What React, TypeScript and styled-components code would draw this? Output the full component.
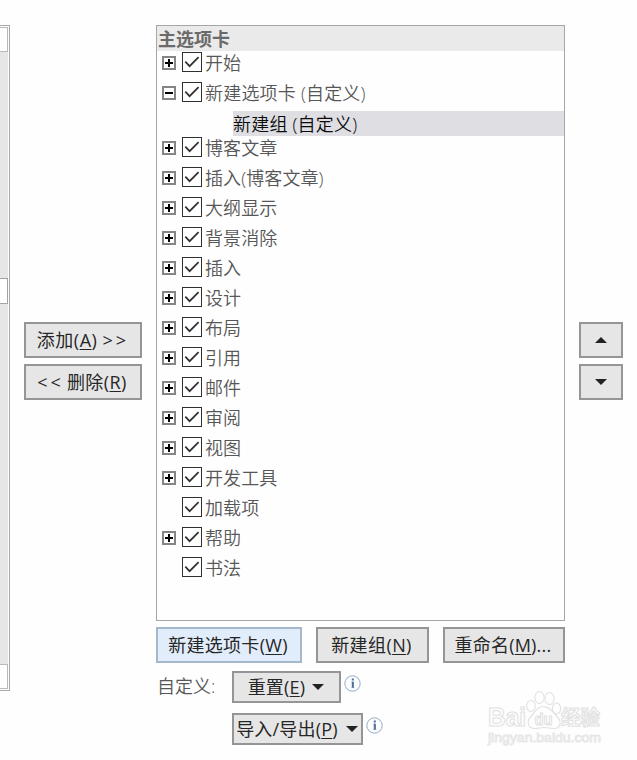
import React from "react";
import styled, { createGlobalStyle } from "styled-components";

const GlobalStyle = createGlobalStyle`
  * { box-sizing: border-box; }
  body {
    margin: 0;
    background: #fefefe;
    font-family: "Open Sans", "Noto Sans CJK SC", sans-serif;
    font-size: 18px;
    overflow: hidden;
  }
`;

const Page = styled.main`
  width: 637px;
  height: 760px;
  display: flex;
  align-items: flex-start;
  padding-top: 25px;
  background: #fefefe;
`;

const SourceList = styled.section`
  width: 10px;
  height: 666px;
  padding: 1px 1px 1px 0;
  border: 1px solid #a9a9a9;
  border-left: 0;
`;

const ScrollTrack = styled.div`
  width: 8px;
  height: 662px;
  display: flex;
  flex-direction: column;
  background: #e6e6e6;
`;

const ScrollPart = styled.div<{ $height: number; $strong?: boolean }>`
  height: ${(p) => p.$height}px;
  border: 1px solid ${(p) => (p.$strong ? "#a3a3a3" : "#b9b9b9")};
  border-left: 0;
  background: #fefefe;
`;

const ScrollSpace = styled.div<{ $height: number }>`
  height: ${(p) => p.$height}px;
`;

const ButtonColumn = styled.div<{ $left: number }>`
  display: flex;
  flex-direction: column;
  gap: 6px;
  margin: 297px 0 0 ${(p) => p.$left}px;
`;

const Button = styled.button<{ $width: number; $height?: number; $active?: boolean }>`
  width: ${(p) => p.$width}px;
  height: ${(p) => p.$height ?? 36}px;
  display: flex;
  align-items: center;
  justify-content: center;
  flex: none;
  padding: 0;
  border: 2px solid ${(p) => (p.$active ? "#a5b8cb" : "#959595")};
  border-radius: 0;
  background: ${(p) => (p.$active ? "#e2edfb" : "#e6e6e6")};
  color: #262626;
  font: inherit;
  line-height: 24px;
  white-space: pre;
`;

const Label = styled.span<{ $spacing?: number }>`
  padding-right: 1px;
  margin-left: -1px;
  letter-spacing: ${(p) => p.$spacing ?? 0.2}px;
`;

const Chevrons = styled.span`
  letter-spacing: 3px;
  margin-right: -2px;
`;

const Key = styled.span`
  text-decoration: underline;
  text-decoration-thickness: 1px;
  text-underline-offset: 2px;
`;

const Center = styled.div`
  width: 409px;
  margin-left: 14px;
`;

const Tree = styled.section`
  height: 596px;
  border: 1px solid #a6a6a6;
`;

const TreeHeader = styled.header`
  height: 25px;
  padding-left: 1px;
  margin-bottom: 1px;
  background: #eaeaea;
  color: #6a6a6a;
  font-weight: 700;
  line-height: 26px;
`;

const TreeRow = styled.div<{ $short?: boolean }>`
  height: ${(p) => (p.$short ? 29 : 30)}px;
  display: grid;
  grid-template-columns: 14px 20px 1fr;
  column-gap: 6px;
  align-items: start;
  padding-left: 5px;
`;

const RowText = styled.span<{ $spacing?: number }>`
  margin-left: -3px;
  color: #575757;
  font-weight: 350;
  line-height: 22px;
  white-space: pre;
  letter-spacing: ${(p) => p.$spacing ?? 0.1}px;
`;

const SelectedRow = styled.div`
  height: 25px;
  margin: 0 0 1px 76px;
  background: #dedee3;
  color: #0c0c0c;
  font-weight: 350;
  line-height: 26px;
  white-space: pre;
  letter-spacing: 0.2px;
`;

const Icon = styled.svg<{ $top?: number; $left?: number }>`
  display: block;
  flex: none;
  margin-top: ${(p) => p.$top ?? 0}px;
  margin-left: ${(p) => p.$left ?? 0}px;
`;

const Actions = styled.div`
  display: flex;
  justify-content: space-between;
  margin-top: 6px;
`;

const Options = styled.div`
  display: grid;
  grid-template-columns: 76px 1fr;
  row-gap: 10px;
  margin-top: 8px;
`;

const OptionLabel = styled.span`
  padding-left: 1px;
  color: #575757;
  font-weight: 350;
  line-height: 31px;
`;

const OptionLine = styled.div`
  grid-column: 2;
  display: flex;
`;

const Watermark = styled.div`
  position: absolute;
  left: 486px;
  top: 688px;
`;

const Expander = ({ open }: { open?: boolean }) => (
  <Icon $top={4} width="14" height="14" viewBox="0 0 14 14">
    <rect x="1" y="1" width="12" height="12" fill="#fff" stroke="#858585" strokeWidth="2" />
    <path d={open ? "M3 7h8" : "M3 7h8M7 3v8"} stroke="#000" strokeWidth="2" />
  </Icon>
);

const Check = () => (
  <Icon width="20" height="20" viewBox="0 0 20 20">
    <rect x=".5" y=".5" width="19" height="19" fill="#fff" stroke="#303030" />
    <path d="M3.3 9.7l4.3 4.5 9-9" fill="none" stroke="#303030" strokeWidth="1.7" />
  </Icon>
);

const Arrow = ({ up, left }: { up?: boolean; left?: number }) => (
  <Icon $left={left} width="12" height="6" viewBox="0 0 12 6">
    <path d={up ? "M0 6L6 0l6 6z" : "M0 0h12L6 6z"} fill="#222" />
  </Icon>
);

const Info = () => (
  <Icon $top={4} $left={3} width="17" height="17" viewBox="0 0 17 17">
    <circle cx="8.5" cy="8.5" r="7.7" fill="#fcfdff" stroke="#93abc5" />
    <path d="M7 7h2.4v5.3M6.8 12.6h4" fill="none" stroke="#a9b8ca" strokeWidth=".6" />
    <path d="M8.8 6.8v6M8.8 3.6v2" stroke="#4c6d96" strokeWidth="2" />
  </Icon>
);

type Tab = { name: string; leaf?: boolean };
const tabs: Tab[] = [
  { name: "博客文章" },
  { name: "插入(博客文章)" },
  { name: "大纲显示" },
  { name: "背景消除" },
  { name: "插入" },
  { name: "设计" },
  { name: "布局" },
  { name: "引用" },
  { name: "邮件" },
  { name: "审阅" },
  { name: "视图" },
  { name: "开发工具" },
  { name: "加载项", leaf: true },
  { name: "帮助" },
  { name: "书法", leaf: true },
];

export default function App() {
  return (
    <Page>
      <GlobalStyle />
      <SourceList>
        <ScrollTrack>
          <ScrollPart $height={25} />
          <ScrollSpace $height={226} />
          <ScrollPart $height={26} $strong />
          <ScrollSpace $height={360} />
          <ScrollPart $height={25} />
        </ScrollTrack>
      </SourceList>
      <ButtonColumn $left={14}>
        <Button $width={118}><Label $spacing={0.5}>添加(<Key>A</Key>) <Chevrons>&gt;&gt;</Chevrons></Label></Button>
        <Button $width={118}><Label $spacing={0.4}><Chevrons>&lt;&lt;</Chevrons> 删除(<Key>R</Key>)</Label></Button>
      </ButtonColumn>
      <Center>
        <Tree>
          <TreeHeader>主选项卡</TreeHeader>
          <TreeRow>
            <Expander />
            <Check />
            <RowText>开始</RowText>
          </TreeRow>
          <TreeRow $short>
            <Expander open />
            <Check />
            <RowText $spacing={0.2}>新建选项卡 (自定义)</RowText>
          </TreeRow>
          <SelectedRow>新建组 (自定义)</SelectedRow>
          {tabs.map((tab, i) => (
            <TreeRow key={i}>
              {tab.leaf ? <span /> : <Expander />}
              <Check />
              <RowText>{tab.name}</RowText>
            </TreeRow>
          ))}
        </Tree>
        <Actions>
          <Button $width={146} $active><Label $spacing={0.3}>新建选项卡(<Key>W</Key>)</Label></Button>
          <Button $width={113}><Label $spacing={0.4}>新建组(<Key>N</Key>)</Label></Button>
          <Button $width={122}><Label>重命名(<Key>M</Key>)...</Label></Button>
        </Actions>
        <Options>
          <OptionLabel>自定义:</OptionLabel>
          <OptionLine>
            <Button $width={109} $height={32}>
              <Label>重置(<Key>E</Key>)</Label>
              <Arrow left={6} />
            </Button>
            <Info />
          </OptionLine>
          <OptionLine>
            <Button $width={131} $height={32}>
              <Label>导入/导出(<Key>P</Key>)</Label>
              <Arrow left={7} />
            </Button>
            <Info />
          </OptionLine>
        </Options>
      </Center>
      <ButtonColumn $left={14}>
        <Button $width={44}><Arrow up /></Button>
        <Button $width={44}><Arrow /></Button>
      </ButtonColumn>
      <Watermark>
        <Icon width="120" height="62" viewBox="0 0 120 62">
          <g fill="#fefefe" stroke="#e1e1e1" strokeWidth="1.1" fontFamily="Liberation Sans, Noto Sans CJK SC, sans-serif" fontWeight="700">
            <text x="2" y="38" fontSize="26" textLength="38" lengthAdjust="spacingAndGlyphs">Bai</text>
            <ellipse cx="45" cy="18" rx="4.3" ry="5.5" />
            <ellipse cx="53.5" cy="9.5" rx="4.6" ry="6" />
            <ellipse cx="63.5" cy="10.5" rx="4.6" ry="6" />
            <ellipse cx="70.5" cy="20.5" rx="4.2" ry="5.5" />
            <path d="M57 18.5c-6 0-8 6-12 10-5 5-3 12 4 12 4 0 5-1 9-1s6 1 10 1c7 0 8-7 3-12-4-4-7-10-14-10z" />
            <text x="48.5" y="37" fontSize="17" textLength="18" lengthAdjust="spacingAndGlyphs">du</text>
            <text x="75" y="37" fontSize="20" textLength="39" lengthAdjust="spacingAndGlyphs">经验</text>
          </g>
          <text x="2" y="54" fontSize="13" fontFamily="Liberation Sans, sans-serif" fill="#fefefe" stroke="#e6e6e6" strokeWidth=".9" textLength="113" lengthAdjust="spacingAndGlyphs">jingyan.baidu.com</text>
        </Icon>
      </Watermark>
    </Page>
  );
}
